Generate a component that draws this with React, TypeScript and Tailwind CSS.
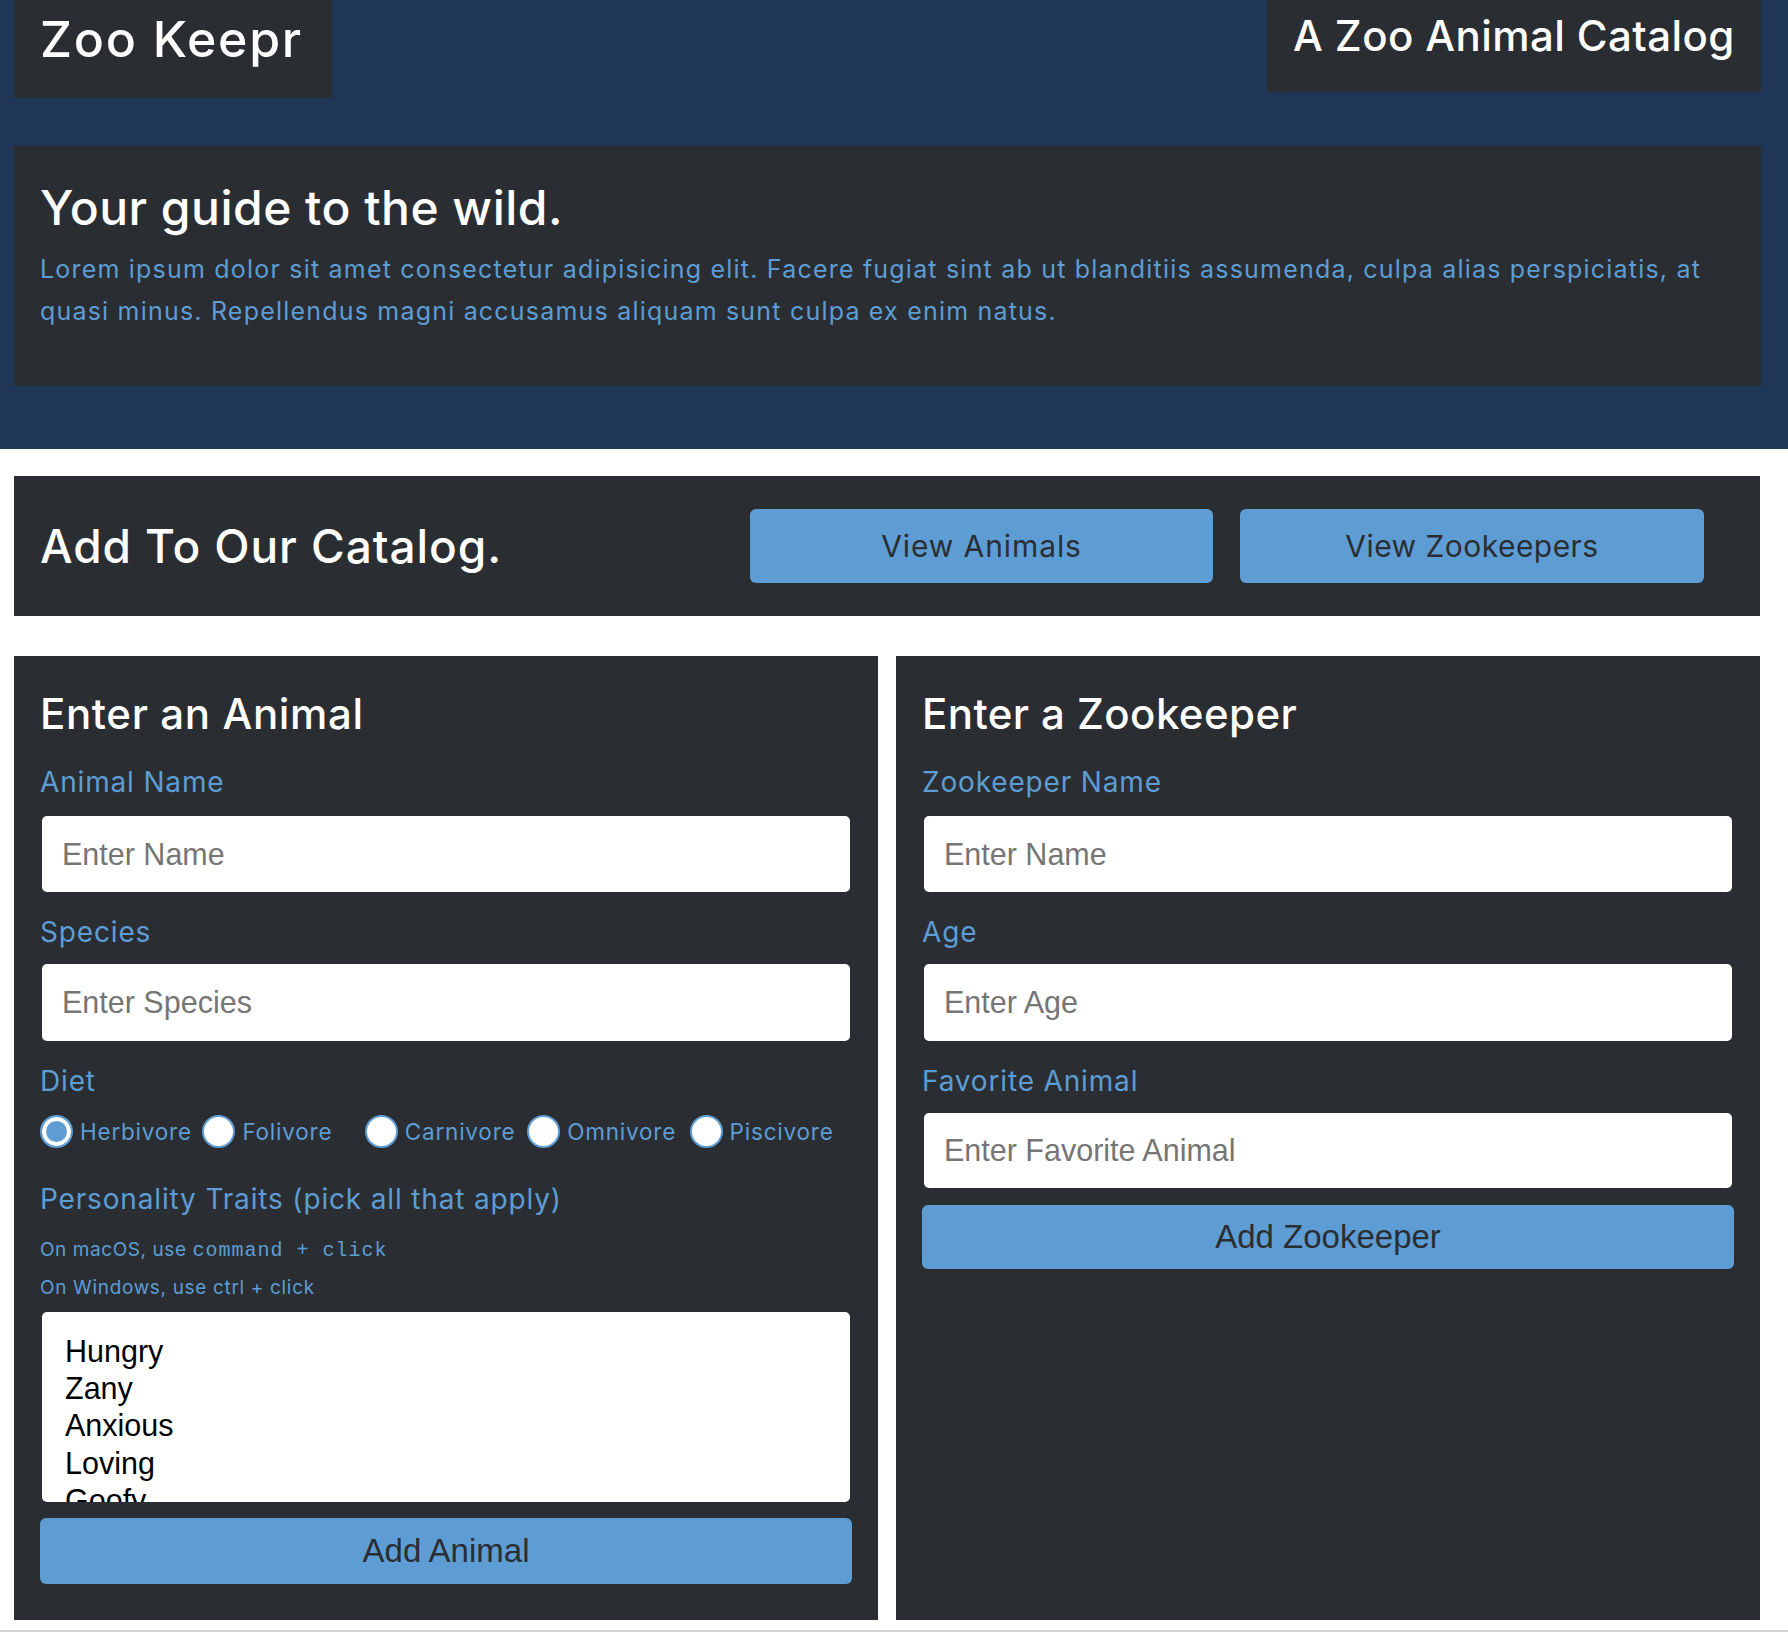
import React from "react";

const karla = "font-['Inter',sans-serif]";
const arial = "font-['Liberation_Sans',Arial,sans-serif]";

function Label({ children, className = "" }: { children: React.ReactNode; className?: string }) {
  return (
    <label className={`block text-[28px] leading-[34px] tracking-[0.03em] text-[#5d9dd4] ${className}`}>
      {children}
    </label>
  );
}

function TextInput({ placeholder, className = "", h = "h-[76px]" }: { placeholder: string; className?: string; h?: string }) {
  return (
    <input
      type="text"
      placeholder={placeholder}
      className={`block mx-[2px] w-[calc(100%-4px)] ${h} rounded-[5px] bg-white pl-[20px] text-[30.5px] text-black placeholder:text-[#757575] outline-none ${arial} ${className}`}
    />
  );
}

function Radio({ label, checked = false }: { label: string; checked?: boolean }) {
  return (
    <label className="flex items-center h-[33px]">
      <input
        type="radio"
        name="diet"
        defaultChecked={checked}
        className="appearance-none shrink-0 w-[33px] h-[33px] rounded-full bg-white border-2 border-[#5d9dd4] checked:bg-[#5d9dd4] checked:shadow-[inset_0_0_0_4px_white] m-0"
      />
      <span className="ml-[7px] text-[22.5px] leading-[33px] tracking-[0.035em] text-[#5d9dd4]">{label}</span>
    </label>
  );
}

export default function App() {
  const traits = ["Hungry", "Zany", "Anxious", "Loving", "Goofy"];
  return (
    <div className={`min-h-screen bg-white ${karla}`}>
      <header className="bg-[#1f3657] pl-[14px] pr-[27px] pb-[63px]">
        <div className="flex items-start justify-between">
          <div className="bg-[#2a2e33] w-[318px] h-[98px] pl-[26px] pt-[9px]">
            <h1 className="text-[50px] leading-[60px] font-medium tracking-[0.035em] text-white whitespace-nowrap">Zoo Keepr</h1>
          </div>
          <div className="bg-[#2a2e33] w-[494px] h-[92px] pl-[26px] pt-[9px]">
            <h2 className="text-[42px] leading-[54px] font-medium tracking-[0.01em] text-white whitespace-nowrap">A Zoo Animal Catalog</h2>
          </div>
        </div>
        <section className="mt-[48px] bg-[#2a2e33] h-[240px] px-[26px] pt-[33px]">
          <h2 className="text-[48px] leading-[58px] font-medium tracking-[0.01em] text-white">Your guide to the wild.</h2>
          <p className="mt-[12px] text-[25px] leading-[41.5px] tracking-[0.048em] text-[#5d9dd4] whitespace-nowrap">
            Lorem ipsum dolor sit amet consectetur adipisicing elit. Facere fugiat sint ab ut blanditiis assumenda, culpa alias perspiciatis, at
            <br />
            quasi minus. Repellendus magni accusamus aliquam sunt culpa ex enim natus.
          </p>
        </section>
      </header>

      <main className="pl-[14px] pr-[28px]">
        <section className="mt-[27px] bg-[#2a2e33] h-[140px] flex items-center justify-between pl-[26px] pr-[56px]">
          <h2 className="text-[46px] leading-[60px] font-medium tracking-[0.02em] text-white">Add To Our Catalog.</h2>
          <div className="flex gap-[27px]">
            <button className="w-[463px] h-[74px] rounded-[6px] bg-[#5e9dd4] text-[30px] tracking-[0.03em] text-[#2a2e33]">
              View Animals
            </button>
            <button className="w-[464px] h-[74px] rounded-[6px] bg-[#5e9dd4] text-[30px] tracking-[0.015em] text-[#2a2e33]">
              View Zookeepers
            </button>
          </div>
        </section>

        <div className="mt-[40px] grid grid-cols-2 gap-[18px]">
          <form className="bg-[#2a2e33] h-[964px] px-[26px] pt-[33px]" onSubmit={(e) => e.preventDefault()}>
            <h3 className="text-[42px] leading-[50px] font-medium tracking-[0.015em] text-white">Enter an Animal</h3>
            <Label className="mt-[26px]">Animal Name</Label>
            <TextInput placeholder="Enter Name" className="mt-[17px]" />
            <Label className="mt-[23px]">Species</Label>
            <TextInput placeholder="Enter Species" className="mt-[15px]" h="h-[77px]" />
            <Label className="mt-[23px]">Diet</Label>
            <div className="mt-[17px] grid grid-cols-5">
              <Radio label="Herbivore" checked />
              <Radio label="Folivore" />
              <Radio label="Carnivore" />
              <Radio label="Omnivore" />
              <Radio label="Piscivore" />
            </div>
            <Label className="mt-[34px]">Personality Traits (pick all that apply)</Label>
            <p className="mt-[22px] h-[24px] text-[19px] leading-[24px] tracking-[0.03em] text-[#5d9dd4] whitespace-nowrap">
              On macOS, use{" "}
              <span className="font-['Liberation_Mono',monospace] text-[20px] leading-[20px] tracking-[0.05em]">command + click</span>
            </p>
            <p className="mt-[14px] h-[24px] text-[19px] leading-[24px] tracking-[0.035em] text-[#5d9dd4]">
              On Windows, use ctrl + click
            </p>
            <div className={`mt-[12px] mx-[2px] h-[190px] overflow-hidden rounded-[5px] bg-white pl-[23px] pt-[20.5px] ${arial}`}>
              {traits.map((t) => (
                <div key={t} className="text-[30.5px] leading-[37.4px] text-black">
                  {t}
                </div>
              ))}
            </div>
            <button className={`mt-[16px] block w-full h-[66px] rounded-[6px] bg-[#5e9dd4] text-[33px] text-[#2a2e33] ${arial}`}>
              Add Animal
            </button>
          </form>

          <form className="bg-[#2a2e33] h-[964px] px-[26px] pt-[33px]" onSubmit={(e) => e.preventDefault()}>
            <h3 className="text-[42px] leading-[50px] font-medium tracking-[0.01em] text-white">Enter a Zookeeper</h3>
            <Label className="mt-[26px]">Zookeeper Name</Label>
            <TextInput placeholder="Enter Name" className="mt-[17px]" />
            <Label className="mt-[23px]">Age</Label>
            <TextInput placeholder="Enter Age" className="mt-[15px]" h="h-[77px]" />
            <Label className="mt-[23px]">Favorite Animal</Label>
            <TextInput placeholder="Enter Favorite Animal" className="mt-[15px]" h="h-[75px]" />
            <button className={`mt-[17px] block w-full h-[64px] rounded-[6px] bg-[#5e9dd4] text-[33px] text-[#2a2e33] ${arial}`}>
              Add Zookeeper
            </button>
          </form>
        </div>
      </main>
      <footer className="mt-[10px] border-t-2 border-[#d1d1d1] h-[40px]"></footer>
    </div>
  );
}
